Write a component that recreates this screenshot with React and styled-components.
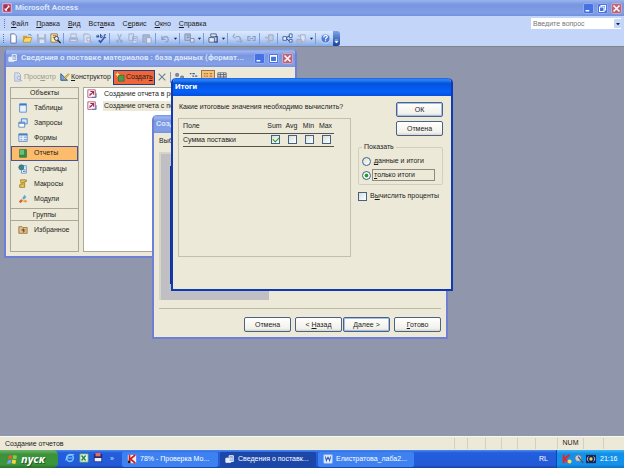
import { useState } from "react";
import styled, { createGlobalStyle, css } from "styled-components";

const GlobalStyle = createGlobalStyle`
    * {
        box-sizing: border-box;
    }
    body {
        margin: 0;
    }
    body, button, input, table {
        font-family: "Liberation Sans", Arial, sans-serif;
        font-size: 7px;
        line-height: 10px;
        color: #1c1c1c;
    }
    button {
        border: none;
        background: none;
        padding: 0;
        white-space: nowrap;
    }
`;

const Screen = styled.div`
    min-height: 100vh;
    display: flex;
    flex-direction: column;
    overflow: hidden;
`;
const TitleBar = styled.header`
    height: 16px;
    padding: 0 2px;
    display: flex;
    align-items: center;
    gap: 3px;
    background: linear-gradient(#9ab4ee, #7896e0 30%, #7f9fe6 80%, #7391dc);
`;
const Title = styled.h1`
    flex: 1;
    min-width: 0;
    margin: 0;
    overflow: hidden;
    white-space: nowrap;
    font-family: Roboto, sans-serif;
    font-size: 8px;
    line-height: 12px;
    font-weight: bold;
    color: ${(props) => (props.$active ? "#ffffff" : "#dbe6fb")};
`;
const CaptionButton = styled.button`
    width: 11px;
    height: 11px;
    display: flex;
    align-items: center;
    justify-content: center;
    border: 1px solid ${(props) => (props.$close ? "#c9a5c8" : "#8fabf2")};
    border-radius: 2px;
    background: ${(props) => (props.$close ? "#bd6478" : "#4671e2")};
`;
const MenuBar = styled.nav`
    height: 15px;
    padding: 0 3px 0 4px;
    display: flex;
    align-items: center;
    background: #c3d6f9;
`;
const Grip = styled.span`
    width: 3px;
    height: 9px;
    border-left: 1px dotted #5a76b4;
`;
const MenuButton = styled.button`
    padding: 0 4px;
`;
const AskBox = styled.div`
    width: 90px;
    height: 11px;
    margin-left: auto;
    display: flex;
    align-items: center;
    background: #fff;
`;
const AskInput = styled.input`
    flex: 1;
    min-width: 0;
    height: 11px;
    padding: 0 2px;
    border: none;
    background: #fff;
    &::placeholder {
        color: #777;
        opacity: 1;
    }
`;
const AskArrow = styled.button`
    width: 7px;
    height: 9px;
    display: flex;
    align-items: center;
    justify-content: center;
    background: #c6d8fa;
`;
const ToolRow = styled.div`
    height: 16px;
    display: flex;
    background: #c3d6f9;
    border-bottom: 1px solid #7f8492;
`;
const ToolBar = styled.div`
    height: 15px;
    padding-left: 3px;
    display: flex;
    align-items: center;
    border-radius: 0 3px 3px 0;
    background: linear-gradient(#dce9fe, #c0d5f8 50%, #86a9e6);
`;
const ToolButton = styled.button`
    width: 14px;
    height: 14px;
    display: flex;
    align-items: center;
    justify-content: center;
    ${(props) => props.$on && css`
        height: 15px;
        border: 1px solid #8f7a55;
        background: #fcbf76;
    `}
`;
const DropButton = styled.button`
    width: 6px;
    height: 14px;
    display: flex;
    align-items: center;
    justify-content: center;
`;
const Separator = styled.span`
    width: 4px;
    height: 11px;
    flex: none;
    background: linear-gradient(#7a9bd8, #7a9bd8) 1px 0 / 1px 100% no-repeat;
`;
const ToolEnd = styled.button`
    width: 7px;
    height: 15px;
    margin-left: 1px;
    display: flex;
    align-items: flex-end;
    justify-content: center;
    padding-bottom: 2px;
    border-radius: 0 3px 3px 0;
    background: linear-gradient(#7ea4ea, #15429a);
`;
const Workspace = styled.main`
    position: relative;
    flex: 1;
    overflow: hidden;
    background: #9097ad;
`;

const Window = styled.section`
    position: absolute;
    left: ${(props) => props.$x}px;
    top: ${(props) => props.$y}px;
    width: ${(props) => props.$w}px;
    height: ${(props) => props.$h}px;
    display: flex;
    flex-direction: column;
    border: solid ${(props) => (props.$active ? "#1039b4" : "#6f7fd4")};
    border-width: 0 2px 2px;
    border-radius: 5px 5px 0 0;
    background: #ece9d8;
    overflow: hidden;
`;
const WindowTitle = styled.header`
    height: 18px;
    flex: none;
    display: flex;
    align-items: center;
    gap: 3px;
    padding: 0 2px;
    background: ${(props) => props.$active
        ? "linear-gradient(#1c5fd8, #2c86fb 10%, #0553dc 30%, #0560f8 75%, #0450dc)"
        : "linear-gradient(#7690e2, #9cb6f0 12%, #7b96e0 35%, #829fe8 85%, #7890dc)"};
`;

const DbTools = styled.div`
    height: 20px;
    flex: none;
    display: flex;
    align-items: center;
    padding: 0 5px;
`;
const DbButton = styled.button`
    height: 15px;
    display: flex;
    align-items: center;
    gap: 1px;
    padding: 0 1px;
    border: 1px solid ${(props) => (props.$on ? "#2b3c80" : "transparent")};
    background: ${(props) => (props.$on ? "#f0663a" : "none")};
    color: ${(props) => (props.disabled ? "#9c9a8e" : "#1c1c1c")};
`;
const DbBody = styled.div`
    flex: 1;
    display: flex;
    gap: 4px;
    padding: 0 0 4px 4px;
`;
const Sidebar = styled.aside`
    width: 69px;
    border: 1px solid #aca899;
`;
const SideHeading = styled.h2`
    margin: 0;
    height: ${(props) => (props.$group ? 13 : 11)}px;
    line-height: ${(props) => (props.$group ? 11 : 10)}px;
    font-size: 7px;
    font-weight: normal;
    text-align: center;
    border-bottom: 1px solid #aca899;
    ${(props) => props.$group && "border-top: 1px solid #aca899;"}
`;
const SideList = styled.div`
    height: ${(props) => (props.$short ? 18 : 109)}px;
    padding: 1px 0;
    display: flex;
    flex-direction: column;
    justify-content: space-between;
`;
const SideItem = styled.button`
    height: 15px;
    display: flex;
    align-items: center;
    gap: 6px;
    padding-left: 6px;
    border: 1px solid ${(props) => (props.$on ? "#4a5590" : "transparent")};
    background: ${(props) => (props.$on ? "#fdbb6c" : "none")};
`;
const ObjectList = styled.div`
    flex: 1;
    border: 1px solid #aca899;
    border-right: none;
    background: #fff;
`;
const ObjectRow = styled.button`
    width: 100%;
    height: 12px;
    display: flex;
    align-items: center;
    gap: 5px;
    padding-left: 3px;
    text-align: left;
`;
const ObjectName = styled.span`
    flex: 1;
    padding: 0 1px;
    margin-left: 1px;
    background: ${(props) => (props.$on ? "#ece9d8" : "none")};
`;

const WizardBody = styled.div`
    flex: 1;
    display: flex;
    flex-direction: column;
    padding: 3px 5px 5px;
`;
const WizardText = styled.p`
    margin: 0;
`;
const Preview = styled.div`
    width: 110px;
    height: 148px;
    margin: 6px 0 8px;
    padding: 12px 0 16px 9px;
    border: solid #d8d5c8;
    border-width: 2px 0 0 2px;
    background: #c0c0c4;
`;
const PreviewPage = styled.div`
    width: 90px;
    height: 118px;
    background: #12308c;
`;
const WizardButtons = styled.footer`
    display: flex;
    justify-content: flex-end;
    align-items: center;
    padding-top: 8px;
    border-top: 1px solid #bdb9a8;
`;
const Button = styled.button`
    width: 47px;
    height: 15px;
    flex: none;
    border: 1px solid #4a6284;
    border-radius: 2px;
    background: linear-gradient(#ffffff, #f2f1ea 80%, #d9d5c8);
    margin-left: ${(props) => props.$gap || 0}px;
    ${(props) => props.$primary && "box-shadow: inset 0 0 0 1px #a3bdec;"}
`;

const TotalsBody = styled.div`
    flex: 1;
    display: flex;
    justify-content: space-between;
    padding: 6px 8px 32px 5px;
`;
const TotalsMain = styled.div`
    width: 173px;
    display: flex;
    flex-direction: column;
    gap: 6px;
`;
const Question = styled.p`
    margin: 0;
    padding-left: 1px;
    white-space: nowrap;
`;
const FieldBox = styled.div`
    flex: 1;
    padding: 1px 16px 0 4px;
    border: 1px solid #c2bfae;
`;
const FieldTable = styled.table`
    width: 100%;
    border-collapse: collapse;
    table-layout: fixed;
    th, td {
        height: 13px;
        padding: 0;
        font-weight: normal;
        text-align: center;
        border-bottom: 1px solid #55534a;
    }
    th {
        width: 17px;
    }
    th:first-child, tbody th {
        width: auto;
        text-align: left;
    }
    td input {
        display: block;
        margin: 0 3px 0 auto;
    }
`;
const tick = css`
    appearance: none;
    width: 9px;
    height: 9px;
    flex: none;
    margin: 0;
    border: 1px solid #3d6488;
    background: linear-gradient(135deg, #dddcd4, #ffffff);
`;
const CheckBox = styled.input.attrs({ type: "checkbox" })`
    ${tick}
    &:checked::after {
        content: "";
        display: block;
        width: 5px;
        height: 3px;
        margin: 1px;
        border: solid #21a121;
        border-width: 0 0 1px 1px;
        transform: rotate(-45deg);
    }
`;
const Radio = styled.input.attrs({ type: "radio" })`
    ${tick}
    border-radius: 50%;
    &:checked {
        background: radial-gradient(#21a121 0 30%, #f2f2ee 45%);
    }
`;
const TotalsSide = styled.div`
    width: 85px;
    display: flex;
    flex-direction: column;
    align-items: flex-end;
    gap: 4px;
`;
const ShowGroup = styled.fieldset`
    width: 100%;
    min-width: 0;
    margin: 2px 0 0;
    padding: 2px 2px 2px 3px;
    border: 1px solid #d2cfbe;
    border-radius: 2px;
`;
const Legend = styled.legend`
    padding: 0 2px;
`;
const Choice = styled.label`
    height: 14px;
    display: flex;
    align-items: center;
    gap: 1px;
    white-space: nowrap;
`;
const ChoiceText = styled.span`
    padding: 0 1px;
    border: 1px solid ${(props) => (props.$focus ? "#8e8b7c" : "transparent")};
    ${(props) => props.$focus && "width: 63px;"}
`;
const PercentChoice = styled(Choice)`
    width: 100%;
`;

const StatusBar = styled.footer`
    height: 14px;
    display: flex;
    align-items: center;
    padding: 0 5px;
    background: #ece9d8;
    border-top: 1px solid #f8f7f0;
`;
const StatusText = styled.span`
    flex: 1;
`;
const StatusCell = styled.span`
    width: ${(props) => props.$w}px;
    height: 11px;
    border-left: 1px solid #d4d0bf;
    text-align: center;
`;
const TaskBar = styled.footer`
    height: 18px;
    display: flex;
    align-items: center;
    background: linear-gradient(#4a8cf4, #245edb 15%, #225ad8 85%, #1941a5);
`;
const Start = styled.button`
    width: 58px;
    height: 18px;
    display: flex;
    align-items: center;
    gap: 3px;
    padding-left: 7px;
    border-radius: 0 5px 5px 0;
    background: linear-gradient(#6db56b, #3b923a 25%, #3c963b 80%, #2a6f2a);
    color: #fff;
    font-family: "Open Sans", sans-serif;
    font-size: 11px;
    line-height: 16px;
    font-weight: bold;
    font-style: italic;
    text-shadow: 1px 1px 1px #1e5220;
`;
const QuickLaunch = styled.div`
    width: 64px;
    display: flex;
    gap: 4px;
    padding-left: 7px;
`;
const QuickButton = styled.button`
    width: 10px;
    height: 12px;
    color: #d4e2ff;
`;
const Tasks = styled.div`
    flex: 1;
    display: flex;
    gap: 2px;
`;
const TaskButton = styled.button`
    width: 96px;
    height: 15px;
    display: flex;
    align-items: center;
    gap: 3px;
    padding-left: 5px;
    border-radius: 2px;
    color: #fff;
    background: ${(props) => (props.$on ? "#1c47a8" : "#3e82f2")};
`;
const Language = styled.span`
    padding-right: 8px;
    color: #fff;
`;
const Tray = styled.div`
    width: 68px;
    height: 18px;
    display: flex;
    align-items: center;
    gap: 2px;
    padding-left: 5px;
    border-left: 1px solid #1042af;
    background: linear-gradient(#3cb4f6, #1290e8 20%, #1393ea 80%, #0f70c4);
    color: #fff;
`;
const Clock = styled.time`
    margin-left: 2px;
`;

const PAGE = <path d="M3 1h4l2 2v8H3z" fill="#fff" stroke="#5e7399" />;

const ICONS = {
    access: <><rect x="1" y="1" width="10" height="10" fill="#b22a4a" stroke="#eed4df" /><path d="M4 9 8 4M7 3l2 2M3 7l3 2" stroke="#fff" strokeWidth="1.5" /></>,
    database: <><path d="M1 5h6v5H1z" fill="#e6eef8" stroke="#edf3ff" /><path d="M5 2h5v7H5z" fill="#7e9bd0" stroke="#fff" /><path d="M6 5h3M6 7h3" stroke="#fff" /></>,
    page: PAGE,
    open: <><path d="M1 3h4l1 1h3v6H1z" fill="#d9a431" /><path d="m1 10 2-5h8L9 10z" fill="#ffda65" stroke="#a57812" strokeWidth=".6" /><path d="M7 2c2-1 3 0 3 1" fill="none" stroke="#4c6eb5" /></>,
    save: <><path d="M1 1h9l1 1v9H1z" fill="#a3b2d0" /><path d="M3 1h6v4H3zM4 7h5v4H4z" fill="#dbe3f3" /></>,
    search: <><path d="M1 1h7v9H1z" fill="#fff0b0" stroke="#8c793e" /><path d="M3 3h4M3 5h3" stroke="#b34f38" /><circle cx="7" cy="6" r="2.2" fill="#d4e9ff" stroke="#383c4c" /><path d="m8.5 8 3 3" stroke="#282828" strokeWidth="1.5" /></>,
    print: <><path d="M3 1h6v4H3z" fill="#d7dff0" stroke="#a5b2cf" /><path d="M1 5h10v5H1z" fill="#a6b3d0" /><path d="M3 8h6" stroke="#e4eaf7" /></>,
    preview: <><path d="M2 1h5l2 2v8H2z" fill="#d5def1" stroke="#a2afce" /><circle cx="7" cy="7" r="2" fill="#d8e4fa" stroke="#98a6c7" /><path d="m9 9 2 2" stroke="#98a6c7" /></>,
    spell: <><path d="M1 5V3l1-1 1 1v2M1 4h2M5 1v4h1.500l.5-1-.5-1H5M11 2H9v3h2" fill="none" stroke="#29458b" /><path d="m3 8 2 2 4-5" fill="none" stroke="#3158b1" strokeWidth="1.800" /></>,
    cut: <path d="M4 1l3 7M8 1 5 8M3 8h2v2H3zM7 8h2v2H7z" fill="none" stroke="#93a2c5" />,
    copy: <path d="M1 1h5v7H1zM5 4h5v7H5zM6 6h3M6 8h3" fill="#d0dcf3" stroke="#9caccf" />,
    paste: <><path d="M1 2h7v8H1z" fill="#a9b6d2" stroke="#94a3c4" /><path d="M5 5h5v6H5z" fill="#e0e8f7" stroke="#98a7c8" /></>,
    undo: <path d="M2 3v4h4M2 7c2-4 7-4 7 0 0 2-1 3-3 3" fill="none" stroke="#8a9cc6" strokeWidth="1.200" />,
    links: <><path d="M1 1h6v7H1z" fill="#b4c2de" stroke="#7f8eae" /><path d="M3 3h3M3 5h3M7 6h4v4H7z" fill="#dce5f6" stroke="#7f8eae" /></>,
    analyze: <><path d="M3 1h6v3H3zM1 5h6v5H1z" fill="#e3eaf7" stroke="#526388" /><path d="M8 4h2v6H7" fill="none" stroke="#364b7f" strokeWidth="1.300" /></>,
    code: <path d="m3 1-2 3 3 2M4 4h4l2 3M5 9h5M8 6l3 3-2 2" fill="none" stroke="#9ba8c5" strokeWidth="1.200" />,
    script: <path d="M5 4H2v4h3M7 4h3v4H7M4 6h4" fill="none" stroke="#8fa0c5" strokeWidth="1.300" />,
    props: <><path d="M5 2h5v6H5z" fill="#c4cde0" stroke="#99a6c2" /><path d="M1 4h5v2H1zM3 8h4v3H3z" fill="#aab5cc" /></>,
    relations: <><path d="M1 4h4v4H1zM8 1h3v4H8zM8 7h3v3H8z" fill="#e7f0ff" stroke="#40609f" /><path d="M5 5l3-2M5 6l3 3" stroke="#253f7c" /></>,
    newObject: <><path d="M5 2h5v7H5z" fill="#dce4f3" stroke="#a4aec7" /><path d="M1 7h5v4H1zM2 2l2 2M4 2 2 4" fill="#b1bcd3" stroke="#a4aec7" /></>,
    help: <><circle cx="6" cy="6" r="5" fill="#4d7dd7" stroke="#d1e1ff" /><path d="M4 5c0-3 4-3 4-1 0 1-2 1-2 3M6 8v1" fill="none" stroke="#fff" strokeWidth="1.300" /></>,
    design: <><path d="M1 2v8h8z" fill="#74a7df" stroke="#254987" /><path d="m4 8 6-6 1 1-6 6z" fill="#ffdf4f" stroke="#7d6516" strokeWidth=".7" /></>,
    create: <><path d="M4 4h7v7H4z" fill="#469c50" stroke="#26642d" strokeWidth=".7" /><path d="m3 0 1 2 2 1-2 1-1 2-1-2-2-1 2-1z" fill="#ffe266" /></>,
    remove: <path d="m2 2 8 8M10 2 2 10" stroke="#6d829f" strokeWidth="1.400" />,
    large: <path d="M1 2h3v3H1zM7 5h3v3H7zM1 8h3M6 10h5" fill="#8ba4c7" stroke="#52647f" />,
    small: <path d="M1 2h2M4 2h3M4 5h2M7 5h3M6 9h4" stroke="#46628f" strokeWidth="1.500" />,
    list: <path d="M1 2h2M4 2h2M8 2h3M1 5h2M4 5h2M8 5h3M1 8h2M4 8h2M8 8h3" stroke="#73613d" />,
    details: <path d="M1 1h10v9H1zM1 3h10M1 5h10M1 7h10M4 1v9M8 1v9" fill="#fff" stroke="#555c6c" />,
    table: <><path d="M2 1h8v10H2z" fill="#e8f3ff" stroke="#4d83c5" /><path d="M2 2h8" stroke="#397acb" strokeWidth="2" /></>,
    query: <><path d="M4 1h7v6H4z" fill="#d7e9ff" stroke="#3974bb" /><path d="M1 5h7v6H1z" fill="#fff" stroke="#4b80c3" /><path d="M1 6h7" stroke="#4b80c3" strokeWidth="1.500" /></>,
    form: <><path d="M1 1h10v9H1z" fill="#e6f1ff" stroke="#4e80bd" /><path d="M1 2h10" stroke="#4e80bd" strokeWidth="2" /><path d="M3 5h2M7 5h3M3 8h2M7 8h3" stroke="#5588c2" /></>,
    report: <><path d="M2 2h8v9H2z" fill="#3f9b58" stroke="#246d3b" /><path d="M2 2h6v6H2z" fill="#69bf76" /><path d="M8 2v7H3" fill="none" stroke="#347c44" /></>,
    web: <><path d="M5 2h5v9H4z" fill="#eaf3ff" stroke="#5e8fc0" /><circle cx="4" cy="4" r="3" fill="#3f8a71" stroke="#336aa7" /><path d="M6 7h3M6 9h3" stroke="#3a79b9" /></>,
    macro: <><path d="M3 1h7v2H8v7H2V7h2z" fill="#eac957" stroke="#9b7c22" /><path d="M5 4h2M5 6h2" stroke="#94751d" /></>,
    module: <><path d="m1 9 3-3 2 2-3 3z" fill="#d9662f" /><path d="m5 5 3-4 2 3-3 3z" fill="#69a4d5" /><path d="m6 8 4-1 1 3H7z" fill="#e1a23c" /></>,
    folder: <><path d="M1 2h4l1 1h5v7H1z" fill="#dfbf83" stroke="#967244" /><path d="M4 6h5M6.500 4v5M5 5l3 3" stroke="#70482d" /></>,
    wizard: <><path d="M1 1h9v9H1z" fill="#fff" stroke="#b04769" /><path d="m3 8 5-5M4 3h4v4M3 6h3" fill="none" stroke="#9f2750" strokeWidth="1.300" /><path d="M6 10h5V5" fill="none" stroke="#496bbb" /></>,
    windows: <><path d="m2 2 4-1-1 4-4 1z" fill="#f05a2c" /><path d="m7 1 4 1-1 4-4-1z" fill="#7fd14b" /><path d="m1 7 4-1-1 4-4 1z" fill="#67a5f2" /><path d="m6 6 4 1-1 4-4-1z" fill="#ffd23c" /></>,
    ie: <><circle cx="6" cy="6" r="4" fill="none" stroke="#67bdf8" strokeWidth="2" /><path d="M3 6h6M1 9C1 4 7 1 11 2" fill="none" stroke="#a3dbff" /></>,
    excel: <><path d="M1 1h10v10H1z" fill="#e8f6ec" stroke="#4b9c60" /><path d="m3 3 5 6M8 3 3 9" stroke="#20823e" strokeWidth="1.600" /></>,
    floppy: <><path d="M1 1h10v10H1z" fill="#252a73" /><path d="M3 0h6v4H3z" fill="#f06b5c" /><path d="M2 6h8v4H2z" fill="#eef0fb" /></>,
    kaspersky: <><path d="M1 1h10v10H1z" fill="#f8e8e8" /><path d="M3 1v10M10 1 4 6l6 5" fill="none" stroke="#d01922" strokeWidth="2" /><path d="M1 8h3v3H1z" fill="#222" /></>,
    word: <><path d="M1 1h10v10H1z" fill="#eef4ff" stroke="#9dbbf2" /><path d="m3 3 1 5 2-4 2 4 1-5" fill="none" stroke="#2656ac" strokeWidth="1.300" /></>,
    trayK: <><path d="M2 1v10M9 1 3 6l6 5" fill="none" stroke="#e02a2a" strokeWidth="2.500" /><circle cx="9" cy="9" r="2.500" fill="#f4e05c" /></>,
    sound: <><circle cx="5" cy="5" r="4" fill="#c7ced8" stroke="#5c6b80" /><path d="m5 3 3 4M9 8l2 3" stroke="#4b4f67" strokeWidth="1.500" /></>,
    net: <><path d="M0 1h12v10H0z" fill="#172554" /><path d="M3 3C1 5 1 7 3 9M9 3c2 2 2 4 0 6" fill="none" stroke="#cad5e9" /><circle cx="6" cy="6" r="2" fill="#f0d35c" /></>,
    minimize: <path d="M2 9h5" stroke="#fff" strokeWidth="2" />,
    maximize: <path d="M2 2h8v8H2zM2 3h8" fill="none" stroke="#fff" strokeWidth="1.500" />,
    restore: <path d="M4 4V2h6v6H8M2 4h6v6H2z" fill="none" stroke="#fff" strokeWidth="1.400" />,
    close: <path d="m2 2 8 8M10 2 2 10" stroke="#fff" strokeWidth="2" />,
    arrow: <path d="M2 4h8L6 9z" fill="#162441" />,
    arrowLight: <path d="M2 2h8M2 5h8L6 10z" fill="#fff" stroke="#fff" />,
};

const Icon = ({ name, size = 10 }) => (
    <svg width={size} height={size} viewBox="0 0 12 12" fill="none" aria-hidden="true">
        {ICONS[name]}
    </svg>
);

const menus = [
    ["", "Ф", "айл"],
    ["", "П", "равка"],
    ["", "В", "ид"],
    ["Вст", "а", "вка"],
    ["С", "е", "рвис"],
    ["", "О", "кно"],
    ["", "С", "правка"],
];

// "|" is a separator, "v" is a drop-down arrow
const tools = [
    "page", "open", "save", "search", "|",
    "print", "preview", "spell", "|",
    "cut", "copy", "paste", "|",
    "undo", "v", "|", "links", "v", "|", "analyze", "v", "|",
    "code", "script", "|", "props", "|",
    "relations", "newObject", "v", "|", "help",
];

const objects = [
    ["table", "Таблицы"],
    ["query", "Запросы"],
    ["form", "Формы"],
    ["report", "Отчеты"],
    ["web", "Страницы"],
    ["macro", "Макросы"],
    ["module", "Модули"],
];

const tasks = [
    ["kaspersky", "78% - Проверка Мо..."],
    ["database", "Сведения о поставк..."],
    ["word", "Елистратова_лаба2..."],
];

const Caption = ({ middle }) => (
    <>
        <CaptionButton aria-label="Свернуть"><Icon name="minimize" size={9} /></CaptionButton>
        <CaptionButton aria-label="Развернуть"><Icon name={middle} size={9} /></CaptionButton>
        <CaptionButton $close aria-label="Закрыть"><Icon name="close" size={9} /></CaptionButton>
    </>
);

const DatabaseWindow = () => {
    const [section, setSection] = useState("Отчеты");

    return (
        <Window $x={4} $y={2} $w={293} $h={209}>
            <WindowTitle>
                <Icon name="database" />
                <Title>Сведения о поставке материалов : база данных (формат...</Title>
                <Caption middle="maximize" />
            </WindowTitle>
            <DbTools>
                <DbButton disabled><Icon name="preview" /><span>Прос<u>м</u>отр</span></DbButton>
                <DbButton><Icon name="design" /><span><u>К</u>онструктор</span></DbButton>
                <DbButton $on><Icon name="create" /><span>Создат<u>ь</u></span></DbButton>
                <ToolButton aria-label="Удалить"><Icon name="remove" /></ToolButton>
                <Separator />
                <ToolButton aria-label="Крупные значки"><Icon name="large" /></ToolButton>
                <ToolButton aria-label="Мелкие значки"><Icon name="small" /></ToolButton>
                <ToolButton $on aria-label="Список"><Icon name="list" /></ToolButton>
                <ToolButton aria-label="Таблица"><Icon name="details" /></ToolButton>
            </DbTools>
            <DbBody>
                <Sidebar>
                    <SideHeading>Объекты</SideHeading>
                    <SideList>
                        {objects.map(([icon, name]) => (
                            <SideItem key={name} $on={section === name} onClick={() => setSection(name)}>
                                <Icon name={icon} />
                                {name}
                            </SideItem>
                        ))}
                    </SideList>
                    <SideHeading $group>Группы</SideHeading>
                    <SideList $short>
                        <SideItem><Icon name="folder" />Избранное</SideItem>
                    </SideList>
                </Sidebar>
                <ObjectList>
                    <ObjectRow>
                        <Icon name="wizard" />
                        <ObjectName>Создание отчета в ре</ObjectName>
                    </ObjectRow>
                    <ObjectRow>
                        <Icon name="wizard" />
                        <ObjectName $on>Создание отчета с по</ObjectName>
                    </ObjectRow>
                </ObjectList>
            </DbBody>
        </Window>
    );
};

const WizardWindow = () => (
    <Window $x={152} $y={68} $w={296} $h={224}>
        <WindowTitle>
            <Title>Созд</Title>
        </WindowTitle>
        <WizardBody>
            <WizardText>Выб</WizardText>
            <Preview><PreviewPage /></Preview>
            <WizardButtons>
                <Button>Отмена</Button>
                <Button $gap={4}>&lt; <u>Н</u>азад</Button>
                <Button $primary $gap={1}><u>Д</u>алее &gt;</Button>
                <Button $gap={4}><u>Г</u>отово</Button>
            </WizardButtons>
        </WizardBody>
    </Window>
);

const TotalsDialog = () => {
    const [show, setShow] = useState("totals");

    return (
        <Window $active role="dialog" aria-label="Итоги" $x={171} $y={31} $w={282} $h={213}>
            <WindowTitle $active>
                <Title $active>Итоги</Title>
            </WindowTitle>
            <TotalsBody>
                <TotalsMain>
                    <Question>Какие итоговые значения необходимо вычислить?</Question>
                    <FieldBox>
                        <FieldTable>
                            <thead>
                                <tr><th>Поле</th><th>Sum</th><th>Avg</th><th>Min</th><th>Max</th></tr>
                            </thead>
                            <tbody>
                                <tr>
                                    <th scope="row">Сумма поставки</th>
                                    <td><CheckBox aria-label="Sum" defaultChecked /></td>
                                    <td><CheckBox aria-label="Avg" /></td>
                                    <td><CheckBox aria-label="Min" /></td>
                                    <td><CheckBox aria-label="Max" /></td>
                                </tr>
                            </tbody>
                        </FieldTable>
                    </FieldBox>
                </TotalsMain>
                <TotalsSide>
                    <Button $primary>ОК</Button>
                    <Button>Отмена</Button>
                    <ShowGroup>
                        <Legend>Показать</Legend>
                        <Choice>
                            <Radio name="show" checked={show === "all"} onChange={() => setShow("all")} />
                            <ChoiceText $focus={show === "all"}><u>д</u>анные и итоги</ChoiceText>
                        </Choice>
                        <Choice>
                            <Radio name="show" checked={show === "totals"} onChange={() => setShow("totals")} />
                            <ChoiceText $focus={show === "totals"}><u>т</u>олько итоги</ChoiceText>
                        </Choice>
                    </ShowGroup>
                    <PercentChoice>
                        <CheckBox />
                        <ChoiceText>В<u>ы</u>числить проценты</ChoiceText>
                    </PercentChoice>
                </TotalsSide>
            </TotalsBody>
        </Window>
    );
};

const App = () => {
    return (
        <Screen>
            <GlobalStyle />
            <TitleBar>
                <Icon name="access" />
                <Title>Microsoft Access</Title>
                <Caption middle="restore" />
            </TitleBar>
            <MenuBar>
                <Grip />
                {menus.map(([before, key, after]) => (
                    <MenuButton key={before + key + after}>{before}<u>{key}</u>{after}</MenuButton>
                ))}
                <AskBox>
                    <AskInput aria-label="Введите вопрос" placeholder="Введите вопрос" />
                    <AskArrow aria-label="Открыть"><Icon name="arrow" size={6} /></AskArrow>
                </AskBox>
            </MenuBar>
            <ToolRow>
                <ToolBar>
                    <Grip />
                    {tools.map((tool, i) => {
                        if (tool === "|") return <Separator key={i} />;
                        if (tool === "v") return <DropButton key={i} aria-label="Ещё"><Icon name="arrow" size={5} /></DropButton>;
                        return <ToolButton key={i} aria-label={tool}><Icon name={tool} size={11} /></ToolButton>;
                    })}
                    <ToolEnd aria-label="Параметры"><Icon name="arrowLight" size={5} /></ToolEnd>
                </ToolBar>
            </ToolRow>
            <Workspace>
                <DatabaseWindow />
                <WizardWindow />
                <TotalsDialog />
            </Workspace>
            <StatusBar>
                <StatusText>Создание отчетов</StatusText>
                <StatusCell $w={13} />
                <StatusCell $w={18} />
                <StatusCell $w={16} />
                <StatusCell $w={16} />
                <StatusCell $w={18} />
                <StatusCell $w={22} />
                <StatusCell $w={26}>NUM</StatusCell>
                <StatusCell $w={20} />
                <StatusCell $w={16} />
            </StatusBar>
            <TaskBar>
                <Start><Icon name="windows" size={11} />пуск</Start>
                <QuickLaunch>
                    <QuickButton aria-label="Internet Explorer"><Icon name="ie" /></QuickButton>
                    <QuickButton aria-label="Excel"><Icon name="excel" /></QuickButton>
                    <QuickButton aria-label="Сохранить"><Icon name="floppy" /></QuickButton>
                    <QuickButton>»</QuickButton>
                </QuickLaunch>
                <Tasks>
                    {tasks.map(([icon, name]) => (
                        <TaskButton key={name} $on={icon === "database"}><Icon name={icon} />{name}</TaskButton>
                    ))}
                </Tasks>
                <Language>RL</Language>
                <Tray>
                    <Icon name="trayK" />
                    <Icon name="sound" />
                    <Icon name="net" />
                    <Clock>21:16</Clock>
                </Tray>
            </TaskBar>
        </Screen>
    );
};

export default App;
